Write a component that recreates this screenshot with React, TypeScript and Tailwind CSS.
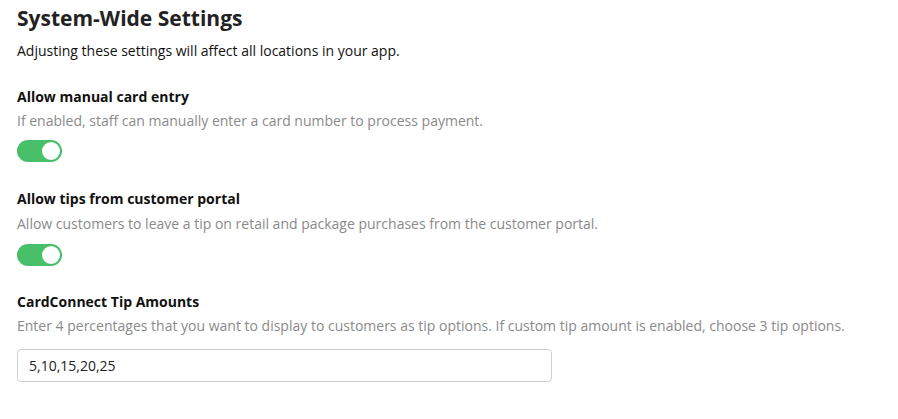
import { useState } from "react";

function Toggle({ on, onChange }: { on: boolean; onChange: (v: boolean) => void }) {
  return (
    <button
      type="button"
      onClick={() => onChange(!on)}
      className={`flex h-[22px] w-[45px] items-center rounded-full p-[2px] ${
        on ? "justify-end bg-[#48bf69]" : "justify-start bg-[#cccccc]"
      }`}
    >
      <span className="block h-[18px] w-[18px] rounded-full bg-white" />
    </button>
  );
}

export default function App() {
  const [manualEntry, setManualEntry] = useState(true);
  const [portalTips, setPortalTips] = useState(true);
  const [tipAmounts, setTipAmounts] = useState("5,10,15,20,25");

  return (
    <div
      className="min-h-[419px] bg-white px-[17px] pt-1 text-[14px] text-[#111]"
      style={{ fontFamily: '"Open Sans", sans-serif' }}
    >
      <h1 className="text-[21px] font-bold leading-7 text-[#222]">System-Wide Settings</h1>
      <p className="mt-[9px] leading-5 text-[#111]">
        Adjusting these settings will affect all locations in your app.
      </p>

      <div className="mt-[26px]">
        <h2 className="font-bold leading-5">Allow manual card entry</h2>
        <p className="mt-1 leading-5 text-[#8a8a8a]">
          If enabled, staff can manually enter a card number to process payment.
        </p>
        <div className="mt-[9px]">
          <Toggle on={manualEntry} onChange={setManualEntry} />
        </div>
      </div>

      <div className="mt-[27px]">
        <h2 className="font-bold leading-5">Allow tips from customer portal</h2>
        <p className="mt-[5px] leading-5 text-[#8a8a8a]">
          Allow customers to leave a tip on retail and package purchases from the customer portal.
        </p>
        <div className="mt-[10px]">
          <Toggle on={portalTips} onChange={setPortalTips} />
        </div>
      </div>

      <div className="mt-[26px]">
        <h2 className="font-bold leading-5">CardConnect Tip Amounts</h2>
        <p className="mt-1 leading-5 text-[#8a8a8a]">
          Enter 4 percentages that you want to display to customers as tip options. If custom tip
          amount is enabled, choose 3 tip options.
        </p>
        <input
          type="text"
          value={tipAmounts}
          onChange={(e) => setTipAmounts(e.target.value)}
          className="mt-[13px] h-[33px] w-[535px] rounded-[4px] border border-[#d0d0d0] px-[11px] text-[14px] text-[#222] outline-none"
        />
      </div>
    </div>
  );
}
